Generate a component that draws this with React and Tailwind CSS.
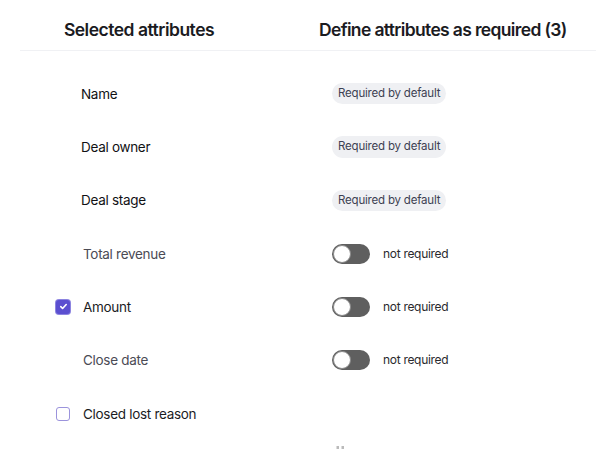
import React, { useState } from 'react';

const rows = [
  { label: 'Name', kind: 'default', tone: 'strong' },
  { label: 'Deal owner', kind: 'default', tone: 'strong' },
  { label: 'Deal stage', kind: 'default', tone: 'strong' },
  { label: 'Total revenue', kind: 'toggle', tone: 'muted' },
  { label: 'Amount', kind: 'toggle', tone: 'normal', checkbox: true, checked: true },
  { label: 'Close date', kind: 'toggle', tone: 'muted' },
  { label: 'Closed lost reason', kind: 'none', tone: 'normal', checkbox: true, checked: false },
];

const Checkbox = ({ checked }) =>
  checked ? (
    <span className="flex h-[14px] w-[14px] items-center justify-center rounded-[3px] bg-[#5b4fd0] ring-1 ring-[#8c84e0]">
      <svg width="9" height="9" viewBox="0 0 10 10" fill="none">
        <path d="M2 5.2l2 2 4-4.4" stroke="white" strokeWidth="1.8" strokeLinecap="round" strokeLinejoin="round" />
      </svg>
    </span>
  ) : (
    <span className="block h-[14px] w-[14px] rounded-[3px] border border-[#9b93dc] bg-white" />
  );

const Toggle = () => (
  <span className="flex h-[20px] w-[38px] items-center rounded-full bg-[#5f5f5f] p-[1px]">
    <span className="block h-[18px] w-[18px] rounded-full border border-[#8a8a8a] bg-white" />
  </span>
);

const App = () => {
  const [items] = useState(rows);

  return (
    <div className="h-[449px] w-[596px] overflow-hidden bg-white font-['Inter',sans-serif]">
      <div className="ml-[20px] flex h-[51px] items-center border-b border-[#f0f1f4] pt-[10px]">
        <div className="w-[238px] text-center text-[17.5px] font-semibold tracking-[-0.5px] text-[#1b1b1f]">
          Selected attributes
        </div>
        <div className="pl-[61px] text-[17.5px] font-semibold tracking-[-0.65px] text-[#1b1b1f]">
          Define attributes as required (3)
        </div>
      </div>

      <div className="pt-[16px]">
        {items.map((row) => (
          <div key={row.label} className="flex h-[53.33px] items-center">
            <div className="flex w-[332px] items-center">
              <div className="flex w-[83px] justify-end pr-[13px]">
                {row.checkbox && <Checkbox checked={row.checked} />}
              </div>
              <span
                className={
                  row.tone === 'strong'
                    ? 'ml-[-2px] text-[13.5px] tracking-[-0.3px] text-[#111114]'
                    : row.tone === 'muted'
                    ? 'text-[13.5px] tracking-[-0.3px] text-[#4b4b55]'
                    : 'text-[13.5px] tracking-[-0.3px] text-[#1c1c1f]'
                }
              >
                {row.label}
              </span>
            </div>
            {row.kind === 'default' && (
              <span className="rounded-full bg-[#eff0f3] px-[6px] py-[2px] text-[11.5px] tracking-[-0.2px] text-[#3d4152]">
                Required by default
              </span>
            )}
            {row.kind === 'toggle' && (
              <div className="flex items-center gap-[13px]">
                <Toggle />
                <span className="text-[12px] tracking-[-0.3px] text-[#2a2a2e]">not required</span>
              </div>
            )}
          </div>
        ))}
      </div>

      <div className="ml-[336px] mt-[6px]">
        <svg width="9" height="4" viewBox="0 0 9 4" fill="none">
          <path d="M0.5 1h2.5M5.5 1h2.5M0.5 3h2.5M5.5 3h2.5" stroke="#777" strokeWidth="1" />
        </svg>
      </div>
    </div>
  );
};

export default App;
